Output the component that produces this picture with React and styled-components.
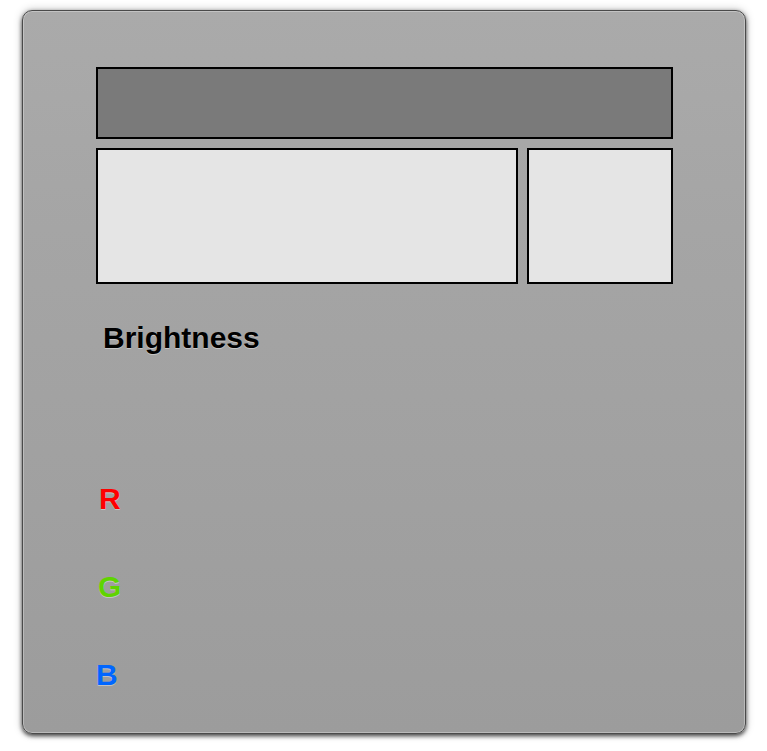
import React from 'react'
import styled, { createGlobalStyle } from 'styled-components'

const GlobalStyle = createGlobalStyle`
  html, body {
    margin: 0;
    padding: 0;
    background: #ffffff;
    font-family: "Liberation Sans", Arial, Helvetica, sans-serif;
  }
  * { box-sizing: border-box; }
`

const Page = styled.div`
  width: 767px;
  height: 751px;
  padding: 10px 0 0 22px;
`

const Panel = styled.div`
  width: 724px;
  height: 724px;
  border: 1px solid #4a4a4a;
  border-radius: 10px;
  background: linear-gradient(to bottom, #aaaaaa 0%, #a5a5a5 30%, #9c9c9c 100%);
  box-shadow: 0 2px 4px rgba(0, 0, 0, 0.7), 0 0 8px rgba(0, 0, 0, 0.25), inset 0 0 0 1px rgba(255, 255, 255, 0.3);
  padding: 56px 73px 0 73px;
  display: flex;
  flex-direction: column;
`

const Preview = styled.div`
  display: grid;
  grid-template-rows: 72px 136px;
  row-gap: 9px;
  width: 577px;
`

const Swatches = styled.div`
  display: grid;
  grid-template-columns: 422px 146px;
  column-gap: 9px;
`

const Swatch = styled.div`
  border: 2px solid #000;
  background: ${(props) => props.fill};
`

const Label = styled.div`
  font-weight: bold;
  font-size: ${(props) => props.size}px;
  line-height: 1;
  color: ${(props) => props.color};
  text-shadow: 0 1px 0 rgba(255, 255, 255, 0.4);
  padding-left: ${(props) => props.indent}px;
`

const Brightness = styled.div`
  margin-top: 39px;
  height: 30px;
`

const Channels = styled.div`
  margin-top: 131px;
  display: flex;
  flex-direction: column;
  gap: 58px;
`

const Channel = styled.div`
  height: 30px;
`

const channels = [
  { name: 'R', color: '#ff0000', indent: 3 },
  { name: 'G', color: '#5fd400', indent: 2 },
  { name: 'B', color: '#0066ff', indent: 0 },
]

const App = () => {
  return (
    <Page>
      <GlobalStyle />
      <Panel>
        <Preview>
          <Swatch fill="#7a7a7a" />
          <Swatches>
            <Swatch fill="#e5e5e5" />
            <Swatch fill="#e5e5e5" />
          </Swatches>
        </Preview>
        <Brightness>
          <Label size={30} color="#000" indent={7}>Brightness</Label>
        </Brightness>
        <Channels>
          {channels.map((c) => (
            <Channel key={c.name}>
              <Label size={30} color={c.color} indent={c.indent}>{c.name}</Label>
            </Channel>
          ))}
        </Channels>
      </Panel>
    </Page>
  )
}

export default App
